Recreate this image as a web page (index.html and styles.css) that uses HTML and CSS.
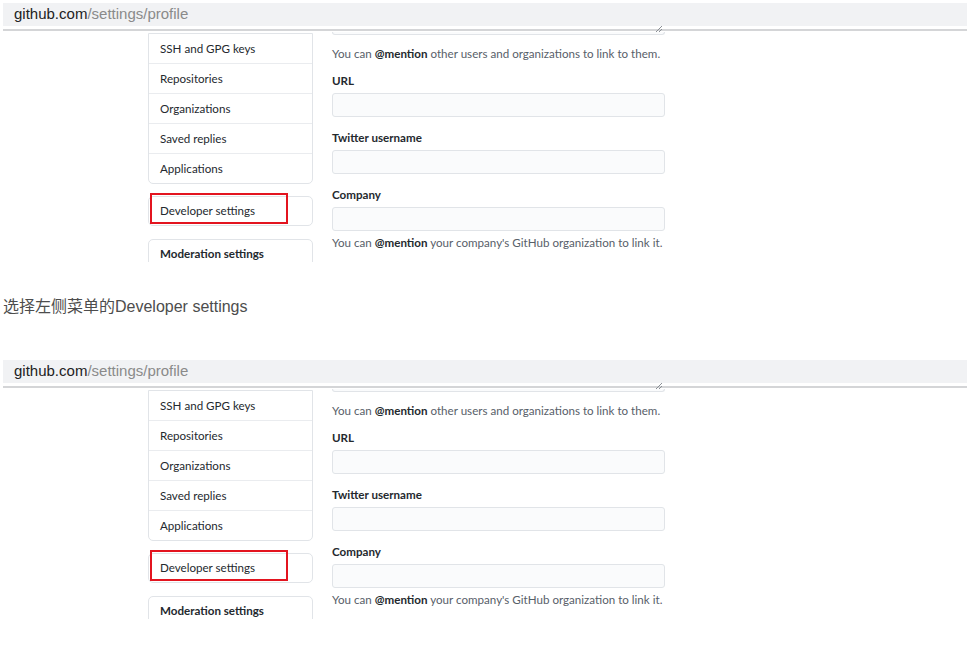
FILE: index.html
```html
<!DOCTYPE html>
<html lang="zh">
<head>
<meta charset="utf-8">
<title>Developer settings</title>
<link rel="stylesheet" href="styles.css">
</head>
<body>
<div class="shot">
  <div class="addr"><span class="host">github.com</span><span class="path">/settings/profile</span></div>
  <div class="rule"></div>
  <div class="content">
    <div class="side">
      <ul class="menu">
        <li>SSH and GPG keys</li>
        <li>Repositories</li>
        <li>Organizations</li>
        <li>Saved replies</li>
        <li>Applications</li>
      </ul>
      <div class="devbox">Developer settings<span class="mark"></span></div>
      <div class="modbox">Moderation settings</div>
    </div>
    <div class="form">
      <div class="stub"><svg class="grip" width="8" height="8" viewBox="0 0 8 8"><path d="M1 7L7 1M4 7L7 4" stroke="#8a8f95" stroke-width="1" fill="none"/></svg></div>
      <p class="note first">You can <b>@mention</b> other users and organizations to link to them.</p>
      <label class="lab">URL</label>
      <div class="input"></div>
      <label class="lab">Twitter username</label>
      <div class="input"></div>
      <label class="lab">Company</label>
      <div class="input"></div>
      <p class="note">You can <b>@mention</b> your company's GitHub organization to link it.</p>
    </div>
  </div>
</div>
<p class="caption">选择左侧菜单的Developer settings</p>
<div class="shot">
  <div class="addr"><span class="host">github.com</span><span class="path">/settings/profile</span></div>
  <div class="rule"></div>
  <div class="content">
    <div class="side">
      <ul class="menu">
        <li>SSH and GPG keys</li>
        <li>Repositories</li>
        <li>Organizations</li>
        <li>Saved replies</li>
        <li>Applications</li>
      </ul>
      <div class="devbox">Developer settings<span class="mark"></span></div>
      <div class="modbox">Moderation settings</div>
    </div>
    <div class="form">
      <div class="stub"><svg class="grip" width="8" height="8" viewBox="0 0 8 8"><path d="M1 7L7 1M4 7L7 4" stroke="#8a8f95" stroke-width="1" fill="none"/></svg></div>
      <p class="note first">You can <b>@mention</b> other users and organizations to link to them.</p>
      <label class="lab">URL</label>
      <div class="input"></div>
      <label class="lab">Twitter username</label>
      <div class="input"></div>
      <label class="lab">Company</label>
      <div class="input"></div>
      <p class="note">You can <b>@mention</b> your company's GitHub organization to link it.</p>
    </div>
  </div>
</div>
</body>
</html>
```
FILE: styles.css
```css
html, body {
  margin: 0;
  padding: 0;
  background: #ffffff;
}
body {
  font-family: "Liberation Sans", Arial, "Noto Sans CJK SC", sans-serif;
  color: #333333;
}
.shot {
  margin: 3px 0 0 3px;
  height: 259px;
  overflow: hidden;
}
.addr {
  height: 23px;
  line-height: 22px;
  background: #f1f2f4;
  padding-left: 11px;
  font-size: 15px;
  font-family: "Liberation Sans", Arial, sans-serif;
}
.host { color: #222222; }
.path { color: #8a8a8a; }
.rule {
  margin-top: 3px;
  border-top: 2px solid #d4d5d7;
}
.content {
  display: flex;
  gap: 19px;
  padding-left: 145px;
  padding-top: 1px;
  font-family: Lato, "Noto Sans", sans-serif;
  font-size: 11.6px;
  color: #24292e;
}
.side {
  width: 165px;
  flex: none;
  padding-top: 1px;
}
.menu {
  list-style: none;
  margin: 0;
  padding: 0;
  border: 1px solid #e1e4e8;
  border-bottom-left-radius: 5px;
  border-bottom-right-radius: 5px;
}
.menu li {
  height: 29px;
  line-height: 29px;
  padding-left: 11px;
  border-bottom: 1px solid #eaecef;
}
.menu li:last-child { border-bottom: none; }
.devbox {
  position: relative;
  margin-top: 12px;
  height: 28px;
  line-height: 28px;
  padding-left: 11px;
  border: 1px solid #e1e4e8;
  border-radius: 5px;
}
.mark {
  position: absolute;
  left: 1px;
  top: -4px;
  width: 134px;
  height: 27px;
  border: 2px solid #e3141f;
}
.modbox {
  margin-top: 13px;
  height: 40px;
  padding: 7px 0 0 11px;
  border: 1px solid #e1e4e8;
  border-radius: 5px;
  font-weight: bold;
  box-sizing: border-box;
}
.form {
  width: 333px;
  flex: none;
  display: flex;
  flex-direction: column;
}
.stub {
  position: relative;
  height: 2px;
  border: 1px solid #e1e4e8;
  border-top: none;
  border-radius: 0 0 3px 3px;
  background: #fafbfc;
}
.grip {
  position: absolute;
  right: 1px;
  bottom: 1px;
}
.note {
  margin: 3px 0 0;
  line-height: 18px;
  color: #586069;
  white-space: nowrap;
}
.note b { color: #24292e; }
.note.first { margin-top: 10px; }
.lab {
  display: block;
  margin-top: 9px;
  line-height: 18px;
  font-weight: bold;
}
.input + .lab { margin-top: 12px; }
.input {
  margin-top: 3px;
  height: 22px;
  border: 1px solid #e1e4e8;
  border-radius: 3px;
  background: #fafbfc;
}
.caption {
  margin: 33px 0 0 3px;
  font-size: 16px;
  line-height: 24px;
  color: #4d4d4d;
  font-family: "Liberation Sans", Arial, "Noto Sans CJK SC", sans-serif;
}
.caption + .shot { margin-top: 41px; }
```
